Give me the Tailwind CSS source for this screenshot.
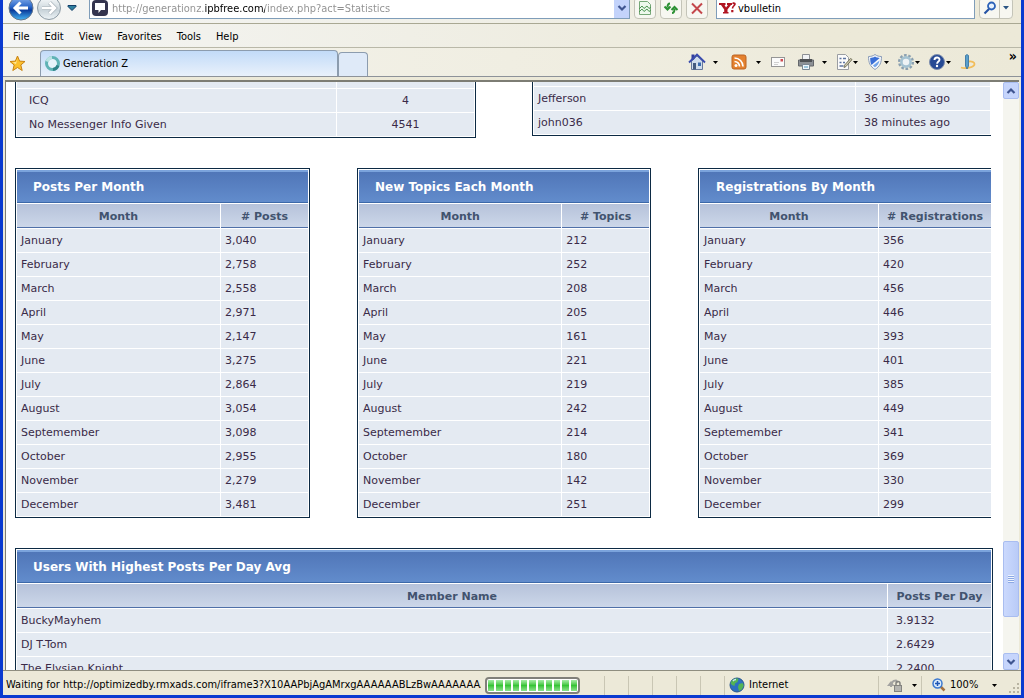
<!DOCTYPE html>
<html lang="en">
<head>
    <meta charset="UTF-8">
    <meta name="viewport" content="width=device-width, initial-scale=1.0">
    <title>Generation Z</title>
    <script src="https://cdn.jsdelivr.net/npm/@tailwindcss/browser@4"></script>
</head>
<body class="flex h-screen flex-col overflow-hidden border-x-[3px] border-b-[3px] border-[#0a3ad0] bg-[#ece9d8] font-['DejaVu_Sans_Condensed','Liberation_Sans',sans-serif] text-[11px] leading-4 text-black">

    <!-- Address bar -->
    <header class="h-6 shrink-0 overflow-hidden border-b border-[#a9a893] bg-linear-to-r from-[#f4f5f4] to-[#ece9d8] pl-1">
        <div class="-mt-1 flex h-[23px] items-center">
            <button aria-label="Back" class="shrink-0">
                <svg class="h-[26px] w-7" viewBox="0 0 28 26">
                    <defs>
                        <linearGradient id="back" x1="0" y1="0" x2="0" y2="1"><stop offset="0" stop-color="#8fb8f0"/><stop offset=".45" stop-color="#2a66c8"/><stop offset=".6" stop-color="#0a3c9c"/><stop offset="1" stop-color="#45b4f4"/></linearGradient>
                        <linearGradient id="fwd" x1="0" y1="0" x2="0" y2="1"><stop offset="0" stop-color="#fafcfd"/><stop offset=".6" stop-color="#c9d4da"/><stop offset="1" stop-color="#eef4f7"/></linearGradient>
                    </defs>
                    <circle cx="14" cy="13" r="12" fill="url(#back)" stroke="#64758c"/>
                    <path d="M21 13H8M13.500 7.500L8 13l5.500 5.500" fill="none" stroke="#fff" stroke-width="3"/>
                </svg>
            </button>
            <button aria-label="Forward" class="shrink-0">
                <svg class="h-[26px] w-7" viewBox="0 0 28 26">
                    <circle cx="14" cy="13" r="11.500" fill="url(#fwd)" stroke="#8d9ba5"/>
                    <path d="M7 13h13M14.500 7.500L20 13l-5.500 5.500" fill="none" stroke="#a9b4bb" stroke-width="4"/>
                    <path d="M7 13h13M14.500 7.500L20 13l-5.500 5.500" fill="none" stroke="#fff" stroke-width="2.500"/>
                </svg>
            </button>
            <button aria-label="Recent pages" class="ml-1 shrink-0">
                <svg class="h-2 w-2.5" viewBox="0 0 10 8"><path d="M1 1.500h8v1L5 6.500l-4-4z" fill="#2d7f9e" stroke="#123c66"/></svg>
            </button>
            <div class="ml-3 flex h-[22px] min-w-0 flex-1 items-center border border-[#7f9db9] bg-white">
                <svg class="mr-1 ml-0.5 size-4 shrink-0" viewBox="0 0 16 16">
                    <rect width="16" height="16" rx="4" fill="#34344e"/>
                    <path d="M3 3h10v7H9l-2.500 3V10H3z" fill="#fff"/>
                </svg>
                <input aria-label="Address" value="http://generationz.ipbfree.com/index.php?act=Statistics" class="min-w-0 flex-1 bg-linear-[90deg,#8e8e8e_93px,#000_93px,#000_153px,#8e8e8e_153px] bg-clip-text pt-0.5 text-transparent outline-none">
                <button aria-label="Show addresses" class="grid h-5 w-[15px] place-items-center bg-[#c3d3fb]">
                    <svg class="h-2 w-2.5" viewBox="0 0 10 8"><path d="M1.500 2L5 5.500 8.500 2" fill="none" stroke="#3f5590" stroke-width="2.200"/></svg>
                </button>
            </div>
            <button aria-label="Compatibility view" class="ml-1 grid size-[22px] shrink-0 place-items-center rounded-sm border border-[#c4c4b8] bg-[#f7f7f1]">
                <svg class="size-4" viewBox="0 0 16 16"><path d="M2.500 1.500h8l3 3v10h-11z" fill="#eef8ec" stroke="#77a878"/><path d="M2 9l3-3 2 2.500L10 6l2 2.500L14 7M2 12l3-3 2 2.500L10 9l2 2.500L14 10" fill="none" stroke="#4d9552"/></svg>
            </button>
            <button aria-label="Refresh" class="ml-1 grid size-[22px] shrink-0 place-items-center rounded-sm border border-[#c4c4b8] bg-[#f7f7f1]">
                <svg class="size-4" viewBox="0 0 16 16"><path d="M7 3.500C4.800 3.500 4.500 5 4.500 7.500M1.500 6.500l3 3 3-3M9 13c2.200 0 2.500-1.500 2.500-4M8.500 10l3-3 3 3" fill="none" stroke="#2c9134" stroke-width="2"/></svg>
            </button>
            <button aria-label="Stop" class="ml-1 grid size-[22px] shrink-0 place-items-center rounded-sm border border-[#c4c4b8] bg-[#f7f7f1]">
                <svg class="size-4" viewBox="0 0 16 16"><path d="M3 3.500l10 10M13 3.500l-10 10" stroke="#c4474b" stroke-width="2"/></svg>
            </button>
            <div class="ml-2 flex h-[22px] w-[259px] items-center border border-[#7f9db9] bg-white">
                <svg class="mx-0.5 h-4 w-[17px] shrink-0" viewBox="0 0 17 16"><path d="M0 3h6.500v2H5.500L7 7.500 9 5H8V3h5v2h-1L8.500 9.500V12h1v1.500H4V12h1.200V9.500L2 5H0zM13.500 2.500c1.500-.8 3.500 0 3.300 1.800-.2 1.700-2.300 2-2.500 4.200h-1.600c.1-2.400 2-2.800 2.100-4 0-.8-.8-.6-1.500-.2zM12.200 10h2.200v2.200h-2.200z" fill="#b01421"/></svg>
                <input aria-label="Search" value="vbulletin" class="min-w-0 flex-1 pt-0.5 outline-none">
            </div>
            <div class="mr-2 ml-1 flex h-[22px] shrink-0 rounded-sm border border-[#c4c4b8] bg-[#f7f7f1]">
                <button aria-label="Go" class="grid w-5 place-items-center border-r border-[#c4c4b8]">
                    <svg class="size-3.5" viewBox="0 0 14 14"><circle cx="8.500" cy="5" r="3.500" fill="#e8f2fd" stroke="#2c62b8" stroke-width="1.800"/><path d="M6 8l-4.500 4.500" stroke="#2452a4" stroke-width="2.200"/></svg>
                </button>
                <button aria-label="Search providers" class="grid w-3 place-items-center">
                    <svg class="h-1 w-1.5" viewBox="0 0 6 4"><path d="M0 0h6L3 3.500z" fill="#2b5584"/></svg>
                </button>
            </div>
        </div>
    </header>

    <!-- Menu -->
    <nav class="flex h-6 shrink-0 items-center gap-[15px] border-b border-[#b9b8a8] bg-linear-to-r from-[#f4f5f4] to-[#ece9d8] to-80% pt-0.5 pl-2.5">
        <button>File</button>
        <button>Edit</button>
        <button>View</button>
        <button>Favorites</button>
        <button>Tools</button>
        <button>Help</button>
    </nav>

    <!-- Tabs and command bar -->
    <div class="flex h-[29px] shrink-0 items-end border-b border-[#8d9299] bg-linear-to-r from-[#f4f3ec] to-[#ece9d8] pl-1">
        <button aria-label="Favorites Center" class="mx-0.5 mb-1 shrink-0">
            <svg class="size-[17px]" viewBox="0 0 17 17"><path d="M8.500 1l2.100 5.100 5.400.4-4.200 3.500 1.400 5.500-4.700-3-4.700 3 1.400-5.500L1 6.500l5.400-.4z" fill="#fbc02e" stroke="#c98212"/><path d="M8.500 3.500L7 7l-3.500.5L7 9z" fill="#ffeaa0"/></svg>
        </button>
        <button class="ml-3 flex h-[26px] w-[298px] items-center gap-0.5 rounded-t-sm border border-b-0 border-[#8c9cae] bg-linear-to-b from-[#c2dbf8] to-[#e9f1fb] pl-[3px]">
            <svg class="size-[17px]" viewBox="0 0 17 17"><circle cx="8.500" cy="8.500" r="6" fill="#e7f3fb" stroke="#5fb3b6" stroke-width="3"/><path d="M3 6.500a6 6 0 0 1 5-4" fill="none" stroke="#b9e2e2" stroke-width="3"/><path d="M14 10.500a6 6 0 0 1-5 4" fill="none" stroke="#2f8288" stroke-width="3"/></svg>
            Generation Z
        </button>
        <button aria-label="New tab" class="h-6 w-[30px] rounded-t-sm border border-b-0 border-[#8c9cae] bg-[#dfeaf8]"></button>
        <div class="ml-auto flex h-7 items-center">
            <button aria-label="Home" class="flex items-center gap-[7px]">
                <svg class="size-[18px]" viewBox="0 0 18 18"><path d="M3.500 8v8.500h11V8L9 3z" fill="#cfdcec" stroke="#66789c"/><path d="M3.500 1.500h3V6l-3 2z" fill="#2f3c9c"/><path d="M1 9.500l8-8 8 8" fill="none" stroke="#3a4cae" stroke-width="1.800"/><path d="M5 10h3v6.500H5z" fill="#445a80"/><path d="M10 9.500h3V13h-3z" fill="#3c6cae"/></svg>
                <svg class="h-[3px] w-[5px]" viewBox="0 0 5 3"><path d="M0 0h5L2.500 3z"/></svg>
            </button>
            <button aria-label="Feeds" class="ml-3 flex items-center gap-2">
                <svg class="size-[18px]" viewBox="0 0 18 18"><rect x="2" y="2" width="14" height="14" rx="2" fill="#e4812f" stroke="#bb6222"/><circle cx="6" cy="12.500" r="1.500" fill="#fff"/><path d="M4.500 8.500a5 5 0 0 1 5 5M4.500 5a8.500 8.500 0 0 1 8.500 8.500" fill="none" stroke="#fff" stroke-width="1.700"/></svg>
                <svg class="h-[3px] w-[5px]" viewBox="0 0 5 3"><path d="M0 0h5L2.500 3z"/></svg>
            </button>
            <button aria-label="Read mail" class="ml-2">
                <svg class="size-[18px]" viewBox="0 0 18 18"><rect x="2.500" y="4.500" width="13" height="9" fill="#fbfbfb" stroke="#969696"/><path d="M11.500 6h2.500v2.500h-2.500z" fill="#cf4b50"/><path d="M5 9.500h5M5 11.500h4" stroke="#d0d0d0"/></svg>
            </button>
            <button aria-label="Print" class="ml-2.5 flex items-center gap-[7px]">
                <svg class="size-[18px]" viewBox="0 0 18 18"><path d="M5.500 1.500h7V7h-7z" fill="#f1f3f6" stroke="#8c8f94"/><path d="M1.500 7h15v6h-15z" fill="#8d9196" stroke="#64676b"/><path d="M3 6h12v3H3z" fill="#4e5155"/><path d="M5.500 11.500h7v5h-7z" fill="#eff6fc" stroke="#7a8794"/><path d="M7 14h4" stroke="#4f9ac0"/></svg>
                <svg class="h-[3px] w-[5px]" viewBox="0 0 5 3"><path d="M0 0h5L2.500 3z"/></svg>
            </button>
            <button aria-label="Page" class="ml-2 flex items-center">
                <svg class="size-[18px]" viewBox="0 0 18 18"><path d="M2.500 1.500h8l3 3v12h-11z" fill="#fbfbfb" stroke="#9a9da2"/><path d="M4.500 5.500h2M8 5.500h3M4.500 9.500h2M8 9.500h2M4.500 13h4" stroke="#5d74a0" stroke-width="1.400"/><path d="M17 6.500l-6 7-2 1 .5-2.300 6-6.700z" fill="#cfcab0" stroke="#77755f"/></svg>
                <svg class="h-[3px] w-[5px]" viewBox="0 0 5 3"><path d="M0 0h5L2.500 3z"/></svg>
            </button>
            <button aria-label="Safety" class="ml-2 flex items-center">
                <svg class="size-[18px]" viewBox="0 0 18 18"><path d="M9 1.500c2 1.500 4 2 6.500 2 0 6-1.500 10-6.500 13-5-3-6.500-7-6.500-13 2.500 0 4.500-.5 6.500-2z" fill="#f4f7fb" stroke="#8a9cb8"/><path d="M9 3.500c1.500 1 3 1.400 4.700 1.500L5.500 12C4.500 10 4.200 8 4.200 5 6 4.900 7.500 4.500 9 3.500z" fill="#3a6fd6"/><path d="M13.500 7.500c-.5 3-2 5-4.500 6.800-.8-.5-1.500-1.100-2-1.800z" fill="#72a4ea"/></svg>
                <svg class="h-[3px] w-[5px]" viewBox="0 0 5 3"><path d="M0 0h5L2.500 3z"/></svg>
            </button>
            <button aria-label="Tools" class="ml-2 flex items-center">
                <svg class="size-[18px]" viewBox="0 0 18 18"><circle cx="9" cy="9" r="6.800" fill="none" stroke="#8ba0b0" stroke-width="2.500" stroke-dasharray="2.600 1.670"/><circle cx="9" cy="9" r="4.600" fill="#eef3f5" stroke="#a5c3d2" stroke-width="2.600"/></svg>
                <svg class="h-[3px] w-[5px]" viewBox="0 0 5 3"><path d="M0 0h5L2.500 3z"/></svg>
            </button>
            <button aria-label="Help" class="ml-2 flex items-center">
                <svg class="size-[18px]" viewBox="0 0 18 18"><circle cx="9" cy="9" r="7.500" fill="#274a94" stroke="#7f8fae"/><path d="M6.500 7c0-3.200 5-3.200 5-.3 0 1.800-2.400 1.900-2.400 4" fill="none" stroke="#fff" stroke-width="1.900"/><circle cx="9" cy="13" r="1.200" fill="#fff"/></svg>
                <svg class="h-[3px] w-[5px]" viewBox="0 0 5 3"><path d="M0 0h5L2.500 3z"/></svg>
            </button>
            <button aria-label="Research" class="ml-2">
                <svg class="size-[18px]" viewBox="0 0 18 18"><path d="M2 14.500c4 1.500 13.500 0 13.500-3.500 0-2.200-3-2.800-5.500-2.500" fill="none" stroke="#f2bd59" stroke-width="1.800"/><path d="M6.500 2.500l1.500-1 1.500 1V13L8 16l-1.500-3z" fill="#5aa0cc" stroke="#2f6c9c" stroke-width=".8"/></svg>
            </button>
            <button aria-label="More commands" class="mr-1 mb-3 ml-8 text-[14px] font-bold">»</button>
        </div>
    </div>

    <!-- Page view -->
    <div class="mx-0.5 mt-[3px] flex min-h-0 flex-1 border-t-2 border-l border-[#7d7d74] bg-white font-['DejaVu_Sans',sans-serif] text-[#3a2a48]">
        <main class="min-w-0 flex-1 overflow-hidden pr-2.5 pl-[9px]">
            <div class="mr-0.5 grid grid-cols-[461fr_459fr] items-start gap-x-14">
                <div class="-mt-[18px] border border-t-0 border-[#0c2a44]">
                    <table class="w-full table-fixed border-separate border-spacing-px">
                        <colgroup><col><col class="w-[30%]"></colgroup>
                        <tbody id="messengers"></tbody>
                    </table>
                </div>
                <div class="-mt-5 border border-t-0 border-r-0 border-[#0c2a44]">
                    <table class="w-full table-fixed border-separate border-spacing-px">
                        <colgroup><col><col class="w-[134px]"></colgroup>
                        <tbody id="visitors"></tbody>
                    </table>
                </div>
            </div>

            <div class="mt-[30px] mr-0.5 grid grid-cols-[295fr_294fr_293fr] gap-x-[47px]">
                <section class="border border-[#0c2a44]">
                    <h2 class="mx-px mt-px flex h-[33px] items-center border-t-2 border-b border-t-[#7ba3dc] border-b-[#3c68a8] bg-linear-to-b from-[#5076b8] to-[#628ccc] pl-4 text-[12px] font-bold text-white">Posts Per Month</h2>
                    <table class="w-full table-fixed border-separate border-spacing-px">
                        <colgroup><col><col class="w-[30%]"></colgroup>
                        <thead>
                            <tr class="h-6 text-[11px] text-[#42536f]">
                                <th class="border-b border-[#4f70a8] bg-linear-to-b from-[#b6c2da] to-[#ccd7e9] pt-0.5">Month</th>
                                <th class="border-b border-[#4f70a8] bg-linear-to-b from-[#b6c2da] to-[#ccd7e9] pt-0.5"># Posts</th>
                            </tr>
                        </thead>
                        <tbody id="posts"></tbody>
                    </table>
                </section>
                <section class="border border-[#0c2a44]">
                    <h2 class="mx-px mt-px flex h-[33px] items-center border-t-2 border-b border-t-[#7ba3dc] border-b-[#3c68a8] bg-linear-to-b from-[#5076b8] to-[#628ccc] pl-4 text-[12px] font-bold text-white">New Topics Each Month</h2>
                    <table class="w-full table-fixed border-separate border-spacing-px">
                        <colgroup><col><col class="w-[30%]"></colgroup>
                        <thead>
                            <tr class="h-6 text-[11px] text-[#42536f]">
                                <th class="border-b border-[#4f70a8] bg-linear-to-b from-[#b6c2da] to-[#ccd7e9] pt-0.5">Month</th>
                                <th class="border-b border-[#4f70a8] bg-linear-to-b from-[#b6c2da] to-[#ccd7e9] pt-0.5"># Topics</th>
                            </tr>
                        </thead>
                        <tbody id="topics"></tbody>
                    </table>
                </section>
                <section class="overflow-hidden border border-r-0 border-[#0c2a44]">
                    <h2 class="mt-px ml-px flex h-[33px] items-center border-t-2 border-b border-t-[#7ba3dc] border-b-[#3c68a8] bg-linear-to-b from-[#5076b8] to-[#628ccc] pl-4 text-[12px] font-bold text-white">Registrations By Month</h2>
                    <table class="w-[calc(100%+1px)] table-fixed border-separate border-spacing-px">
                        <colgroup><col><col class="w-[112px]"></colgroup>
                        <thead>
                            <tr class="h-6 text-[11px] text-[#42536f]">
                                <th class="border-b border-[#4f70a8] bg-linear-to-b from-[#b6c2da] to-[#ccd7e9] pt-0.5">Month</th>
                                <th class="border-b border-[#4f70a8] bg-linear-to-b from-[#b6c2da] to-[#ccd7e9] pt-0.5"># Registrations</th>
                            </tr>
                        </thead>
                        <tbody id="registrations"></tbody>
                    </table>
                </section>
            </div>

            <section class="mt-[30px] border border-[#0c2a44]">
                <h2 class="mx-px mt-px flex h-[33px] items-center border-t-2 border-b border-t-[#7ba3dc] border-b-[#3c68a8] bg-linear-to-b from-[#5076b8] to-[#628ccc] pl-4 text-[12px] font-bold text-white">Users With Highest Posts Per Day Avg</h2>
                <table class="w-full table-fixed border-separate border-spacing-px">
                    <colgroup><col><col class="w-[103px]"></colgroup>
                    <thead>
                        <tr class="h-6 text-[11px] text-[#42536f]">
                            <th class="border-b border-[#4f70a8] bg-linear-to-b from-[#b6c2da] to-[#ccd7e9] pt-0.5">Member Name</th>
                            <th class="border-b border-[#4f70a8] bg-linear-to-b from-[#b6c2da] to-[#ccd7e9] pt-0.5">Posts Per Day</th>
                        </tr>
                    </thead>
                    <tbody id="top-users"></tbody>
                </table>
            </section>
        </main>

        <!-- Scrollbar -->
        <div class="flex w-4 shrink-0 flex-col bg-[#f5f5ef]">
            <button aria-label="Scroll up" class="grid h-[17px] place-items-center rounded-xs border border-[#a9bdf0] bg-[#c6d5fc]">
                <svg class="h-2 w-2.5" viewBox="0 0 10 8"><path d="M1.500 6L5 2.500 8.500 6" fill="none" stroke="#3f5590" stroke-width="2.200"/></svg>
            </button>
            <div class="grow-[443]"></div>
            <div class="grid h-[76px] place-items-center rounded-xs border border-[#a9bdf0] bg-linear-to-r from-[#cbd9fd] to-[#b9cbf7]">
                <div class="h-2 w-1.5 bg-[repeating-linear-gradient(#eef4fe_0_1px,#8ca8e4_1px_2px)]"></div>
            </div>
            <div class="grow-[36]"></div>
            <button aria-label="Scroll down" class="grid h-[17px] place-items-center rounded-xs border border-[#a9bdf0] bg-[#c6d5fc]">
                <svg class="h-2 w-2.5" viewBox="0 0 10 8"><path d="M1.500 2L5 5.500 8.500 2" fill="none" stroke="#3f5590" stroke-width="2.200"/></svg>
            </button>
        </div>
    </div>

    <!-- Status bar -->
    <footer class="flex h-[25px] shrink-0 items-center border-t border-[#8f8e80] pt-1 pl-[3px]">
        <div class="min-w-0 flex-1 overflow-hidden whitespace-nowrap">Waiting for http://optimizedby.rmxads.com/iframe3?X10AAPbjAgAMrxgAAAAAABLzBwAAAAAAAAAA</div>
        <div role="progressbar" aria-label="Loading" class="mr-6 ml-1 flex h-[17px] w-[95px] shrink-0 gap-0.5 rounded-sm border-2 border-[#80807a] bg-white p-px" id="progress"></div>
        <div class="flex h-[19px] shrink-0">
            <div class="w-6 border-l border-[#c9c6b4]"></div>
            <div class="w-6 border-l border-[#c9c6b4]"></div>
            <div class="w-6 border-l border-[#c9c6b4]"></div>
            <div class="w-6 border-l border-[#c9c6b4]"></div>
            <div class="w-6 border-l border-[#c9c6b4]"></div>
            <div class="flex w-[154px] items-center gap-1 border-l border-[#c9c6b4] pl-1">
                <svg class="size-4" viewBox="0 0 16 16"><circle cx="8" cy="8" r="7" fill="#2c6fc0" stroke="#28578c"/><path d="M3 3.500C5 1.500 8 1 9.500 2L8.500 5 6 6.500 5.500 9 3 8 1.500 6zM10 7l3.500-1 1.300 2.500-2 4L10 14l-1-4z" fill="#53b455"/><path d="M4 4c1-1.200 2-1.500 3-1.500" stroke="#c9ecf4" stroke-width="1.500"/></svg>
                Internet
            </div>
            <button aria-label="Protected mode" class="flex w-[43px] items-center gap-2 border-l border-[#c9c6b4] pl-2">
                <svg class="h-4 w-[17px] shrink-0" viewBox="0 0 17 16"><path d="M4 10c0-4 1-6.500 5-6.500l2 2" fill="none" stroke="#a2a2a0" stroke-width="2"/><path d="M0 9l4-5 3.500 5z" fill="#a2a2a0"/><rect x="7.500" y="8.500" width="7" height="6" fill="#b4b4b0" stroke="#83837f"/><path d="M9 8V6.500a2 2 0 0 1 4 0V8" fill="none" stroke="#83837f" stroke-width="1.500"/></svg>
                <svg class="h-[3px] w-[5px] shrink-0" viewBox="0 0 5 3"><path d="M0 0h5L2.500 3z"/></svg>
            </button>
            <button aria-label="Zoom level" class="flex w-[100px] items-center border-l border-[#c9c6b4] pl-2.5">
                <svg class="mr-1 size-[14px]" viewBox="0 0 14 14"><path d="M8.500 8.500l4 4" stroke="#a5713f" stroke-width="2.500"/><circle cx="5.500" cy="5.500" r="4.500" fill="#dcecfb" stroke="#3b78cf" stroke-width="1.500"/><path d="M3 5.500h5M5.500 3v5" stroke="#1e56b4" stroke-width="1.500"/></svg>
                100%
                <svg class="ml-3.5 h-[3px] w-[5px]" viewBox="0 0 5 3"><path d="M0 0h5L2.500 3z"/></svg>
                <svg class="ml-auto size-3 self-end" viewBox="0 0 12 12" fill="#b8b4a2"><path d="M8 0h2v2H8zM4 4h2v2H4zM8 4h2v2H8zM0 8h2v2H0zM4 8h2v2H4zM8 8h2v2H8z"/></svg>
            </button>
        </div>
    </footer>

    <script>
        const months = ["January", "February", "March", "April", "May", "June", "July", "August", "Septemember", "October", "November", "December"];

        const stats = {
            posts: ["3,040", "2,758", "2,558", "2,971", "2,147", "3,275", "2,864", "3,054", "3,098", "2,955", "2,279", "3,481"],
            topics: ["212", "252", "208", "205", "161", "221", "219", "242", "214", "180", "142", "251"],
            registrations: ["356", "420", "456", "446", "393", "401", "385", "449", "341", "369", "330", "299"]
        };

        function renderRows(id, rows, firstClass, secondClass) {
            document.getElementById(id).innerHTML = rows.map(([name, value]) => `
                <tr class="h-[23px] bg-[#e4eaf2]">
                    <td class="${firstClass}">${name}</td>
                    <td class="${secondClass}">${value}</td>
                </tr>
            `).join("");
        }

        Object.keys(stats).forEach(id => {
            renderRows(id, months.map((month, i) => [month, stats[id][i]]), "pl-1", "pl-1");
        });

        renderRows("messengers", [["", ""], ["ICQ", "4"], ["No Messenger Info Given", "4541"]], "pl-3", "text-center");
        renderRows("visitors", [["", ""], ["Jefferson", "36 minutes ago"], ["john036", "38 minutes ago"]], "pl-1", "pl-2");
        renderRows("top-users", [["BuckyMayhem", "3.9132"], ["DJ T-Tom", "2.6429"], ["The Elysian Knight", "2.2400"]], "pl-1", "pl-2");

        document.getElementById("progress").innerHTML =
            '<div class="flex-1 bg-linear-to-b from-[#a5eda5] via-[#35c435] to-[#8be28b]"></div>'.repeat(11);
    </script>
</body>
</html>
